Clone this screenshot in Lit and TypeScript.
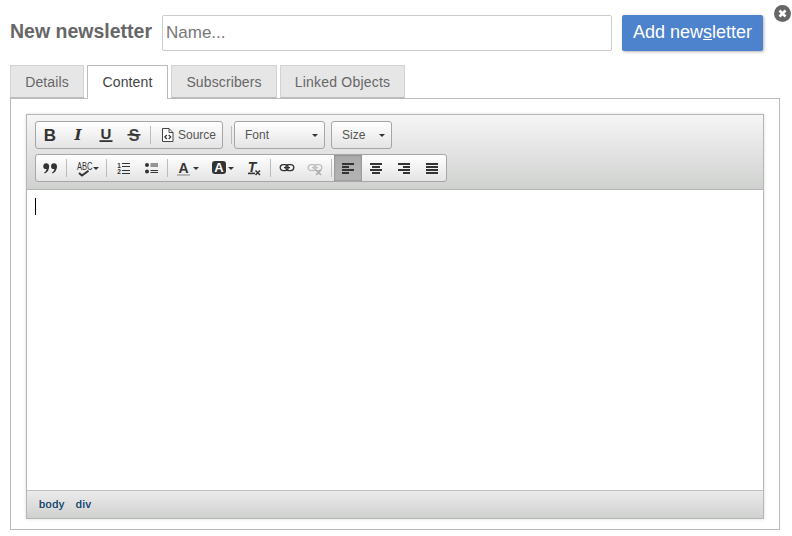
import { LitElement, html, css, svg } from "lit";
import { customElement } from "lit/decorators.js";

const I = (body: unknown, w = 16, h = 16) => html`<svg width=${w} height=${h} viewBox="0 0 ${w} ${h}">${body}</svg>`;
const T = (body: unknown, w = 16) => html`<svg width=${w} height="20" viewBox="0 -2 ${w} 20">${body}</svg>`;
const arrow = html`<i class="arrow"></i>`;

const bold = T(svg`<text x="8" y="13.5" class="tb">B</text>`);
const italic = T(svg`<text x="8" y="13" class="ti">I</text>`);
const under = T(svg`<text x="8" y="11.5" class="tu">U</text><rect x="1.5" y="13.2" width="13" height="1.8" fill="#333"/>`);
const strike = T(svg`<text x="8" y="13.5" class="ts">S</text><rect x="1.5" y="7" width="13" height="1.6" fill="#333"/>`);
const quote = I(svg`<g fill="#333"><circle cx="4.2" cy="6.2" r="2.9"/><path d="M7.1 6.2C7.1 10 5.400 12.600 2.600 13.400L2.200 12.400C3.800 11.400 4.600 10.200 4.600 8.400z"/><circle cx="12" cy="6.2" r="2.9"/><path d="M14.900 6.200C14.900 10 13.200 12.600 10.400 13.400L10 12.400C11.600 11.400 12.400 10.200 12.400 8.400z"/></g>`);
const abc = T(svg`<text transform="translate(1 9.500) scale(.94 1.3)" class="t8">ABC</text><path d="M3 13L6 15.500L12.500 10.800" fill="none" stroke="#333" stroke-width="2"/>`, 17);
const ol = T(svg`<text x="2.200" y="7.500" class="t7">1</text><text x="2.200" y="14" class="t7">2</text><path d="M7 3.500h8M7 6.500h8M7 10.500h8M7 13.500h8" stroke="#333" stroke-width="1.200"/>`);
const ul = I(svg`<circle cx="4" cy="5" r="2" fill="#333"/><circle cx="4" cy="11.500" r="2" fill="#333"/><path d="M7.500 4h7.500M7.500 6h7.500M7.500 10.500h7.500M7.500 12.500h7.500" stroke="#333" stroke-width="1.100"/>`);
const colorA = T(svg`<text x="6.500" y="13" class="ta">A</text><rect x="0" y="14.200" width="13" height="1.600" fill="#aaa"/>`);
const bgA = T(svg`<rect x="0" y="1" width="14" height="13" rx="3" fill="#333"/><text x="7" y="12" class="ta w">A</text>`);
const clear = T(svg`<text x="6" y="11.500" class="tt">T</text><rect x="2" y="12.600" width="7" height="1.600" fill="#333"/><path d="M9.500 10.500l4.500 4.500M14 10.500l-4.500 4.500" stroke="#333" stroke-width="1.500"/>`);
const chain = (c: string) => svg`<g fill="none" stroke=${c} stroke-width="1.300"><rect x="1.200" y="4.600" width="8" height="6" rx="3"/><rect x="6.800" y="4.600" width="8" height="6" rx="3"/></g><path d="M5 7.600h6" stroke=${c} stroke-width="1.200"/>`;
const link = I(chain("#333"));
const unlink = I(svg`${chain("#c0c0c0")}<path d="M9 10l5 5M14 10l-5 5" stroke="#aaa" stroke-width="1.500"/>`);
const align = (rows: [number, number][]) => I(svg`${rows.map(([x, w], i) => svg`<rect x=${x} y=${3 + i * 3} width=${w} height="2" fill="#333" />`)}`);
const src = I(svg`<path d="M2.500 1.500h6.500l4 4v9h-10.500z" fill="#fff" stroke="#444"/><path d="M9 1.500v4h4" fill="none" stroke="#444"/><path d="M6.800 8l-2 2 2 2M8.700 8l2 2-2 2" fill="none" stroke="#333" stroke-width="1.200"/>`);

@customElement("app-root")
export class AppRoot extends LitElement {
  static styles = css`
    :host { display: block; position: relative; height: 536px; padding: 15px 12px 0 10px; box-sizing: border-box; font-family: "Liberation Sans", Arial, sans-serif; background: #fff; }
    .head { display: flex; align-items: center; padding-right: 17px; height: 36px; }
    h1 { margin: 0 10px 3px 0; font-size: 19.5px; font-weight: 700; color: #666; white-space: nowrap; width: 142px; flex: none; }
    .name { flex: 1; min-width: 0; height: 36px; box-sizing: border-box; border: 1px solid #ccc; border-radius: 2px; padding: 0 3px; font: 17px "Liberation Sans", Arial, sans-serif; color: #333; background: #fff; outline: none; }
    .name::placeholder { color: #777; opacity: 1; }
    .add { margin-left: 10px; width: 141px; height: 36px; box-sizing: border-box; border: 0; border-radius: 2px; background: #4d82cc; color: #fff; font: 18px "Liberation Sans", Arial, sans-serif; padding: 0 0 2px; box-shadow: 1px 1px 3px rgba(0,0,0,.3); }
    .add u { text-decoration-thickness: 1px; }
    .close { position: absolute; left: 774px; top: 5px; }
    .tabs { display: flex; gap: 3px; margin-top: 14px; height: 33px; position: relative; z-index: 1; }
    .tab { box-sizing: border-box; height: 33px; text-align: center; border: 1px solid #d2d2d2; border-bottom-color: #bbb; background: #e6e6e6; color: #666; font-size: 14px; line-height: 32px; letter-spacing: .12px; }
    .tab.on { height: 34px; background: #fff; color: #444; border-color: #bbb; border-bottom: 0; }
    .w1 { width: 74px; }
    .w2 { width: 81px; }
    .w3 { width: 106px; }
    .w4 { width: 125px; letter-spacing: .2px; }
    .panel { border: 1px solid #bbb; height: 432px; box-sizing: border-box; padding: 15px 15px 0; }
    .editor { border: 1px solid #b6b6b6; box-shadow: 0 0 3px rgba(0,0,0,.15); }
    .bar { display: flex; flex-direction: column; gap: 5px; padding: 6px 8px 7px; height: 75px; box-sizing: border-box; background: linear-gradient(#f5f5f5, #cfd1cf); border-bottom: 1px solid #b6b6b6; }
    .row { display: flex; align-items: center; height: 28px; }
    .grp { display: flex; align-items: center; height: 28px; box-sizing: border-box; border: 1px solid #a6a6a6; border-radius: 3px; background: linear-gradient(#fff, #e4e4e4); }
    .b { display: flex; align-items: center; justify-content: center; width: 28px; height: 26px; box-sizing: border-box; color: #333; }
    .b.m { width: 35px; justify-content: flex-start; padding-left: 7px; }
    .b.on { background: linear-gradient(#aaa, #b4b4b4); box-shadow: inset 0 0 2px rgba(0,0,0,.4); }
    .sep { width: 1px; height: 18px; margin: 0 2px; background: #bcbcbc; flex: none; }
    .source { display: flex; align-items: center; padding-left: 7px; width: 69px; box-sizing: border-box; height: 26px; font-size: 12px; color: #555; gap: 2px; }
    .combo { display: flex; align-items: center; justify-content: space-between; height: 28px; box-sizing: border-box; border: 1px solid #a6a6a6; border-radius: 3px; background: linear-gradient(#fff, #e4e4e4); font-size: 12px; color: #555; padding: 0 6px 0 10px; }
    .font { width: 91px; margin-right: 6px; }
    .size { width: 61px; }
    .sep.out { margin: 0 2px 0 8px; }
    .arrow { display: block; width: 0; height: 0; border: 3px solid transparent; border-top-color: #333; border-bottom: 0; flex: none; }
    .body { height: 300px; box-sizing: border-box; padding: 8px; background: #fff; }
    .caret { width: 1px; height: 17px; background: #000; }
    .foot { display: flex; gap: 11px; align-items: center; height: 28px; box-sizing: border-box; padding: 0 12px 2px; border-top: 1px solid #bfbfbf; background: linear-gradient(#ebebeb, #cfd1cf); color: #1e4a72; font-size: 11px; letter-spacing: .5px; text-shadow: 0 0 .4px #1e4a72; }
    svg { display: block; flex: none; }
    .tb { font: 700 17px "Liberation Sans", sans-serif; fill: #333; text-anchor: middle; }
    .ti { font: italic 700 15px "DejaVu Serif", serif; fill: #333; text-anchor: middle; }
    .tu { font: 700 15px "Liberation Sans", sans-serif; fill: #333; text-anchor: middle; }
    .ts { font: 700 16px "Liberation Sans", sans-serif; fill: #444; text-anchor: middle; }
    .t8 { font: 8px "Liberation Sans", sans-serif; fill: #333; }
    .t7 { font: 700 6.5px "Liberation Sans", sans-serif; fill: #333; }
    .ta { font: 700 14px "Liberation Sans", sans-serif; fill: #333; text-anchor: middle; }
    .ta.w { fill: #fff; font-size: 13px; }
    .tt { font: italic 700 14px "Liberation Sans", sans-serif; fill: #333; text-anchor: middle; }
  `;

  render() {
    return html`
      <div class="head">
        <h1>New newsletter</h1>
        <input class="name" placeholder="Name..." />
        <button class="add">Add new<u>s</u>letter</button>
      </div>
      <svg class="close" width="17" height="17" viewBox="0 0 17 17"><circle cx="8.500" cy="8.500" r="8.500" fill="#666"/><path d="M5.500 5.500l6 6M11.500 5.500l-6 6" stroke="#fff" stroke-width="2.600"/></svg>
      <div class="tabs">
        <div class="tab w1">Details</div>
        <div class="tab on w2">Content</div>
        <div class="tab w3">Subscribers</div>
        <div class="tab w4">Linked Objects</div>
      </div>
      <div class="panel">
        <div class="editor">
          <div class="bar">
            <div class="row">
              <div class="grp">
                <span class="b">${bold}</span>
                <span class="b">${italic}</span>
                <span class="b">${under}</span>
                <span class="b">${strike}</span>
                <i class="sep"></i>
                <span class="source">${src}Source</span>
              </div>
              <i class="sep out"></i>
              <div class="combo font">Font${arrow}</div>
              <div class="combo size">Size${arrow}</div>
            </div>
            <div class="row">
              <div class="grp">
                <span class="b">${quote}</span>
                <i class="sep"></i>
                <span class="b m">${abc}${arrow}</span>
                <i class="sep"></i>
                <span class="b">${ol}</span>
                <span class="b">${ul}</span>
                <i class="sep"></i>
                <span class="b m">${colorA}${arrow}</span>
                <span class="b m">${bgA}${arrow}</span>
                <span class="b">${clear}</span>
                <i class="sep"></i>
                <span class="b">${link}</span>
                <span class="b">${unlink}</span>
                <i class="sep"></i>
                <span class="b on">${align([[2, 12], [2, 7], [2, 12], [2, 7]])}</span>
                <span class="b">${align([[2, 12], [4, 8], [2, 12], [4, 8]])}</span>
                <span class="b">${align([[2, 12], [7, 7], [2, 12], [7, 7]])}</span>
                <span class="b">${align([[2, 12], [2, 12], [2, 12], [2, 12]])}</span>
              </div>
            </div>
          </div>
          <div class="body"><div class="caret"></div></div>
          <div class="foot"><span>body</span><span>div</span></div>
        </div>
      </div>
    `;
  }
}
